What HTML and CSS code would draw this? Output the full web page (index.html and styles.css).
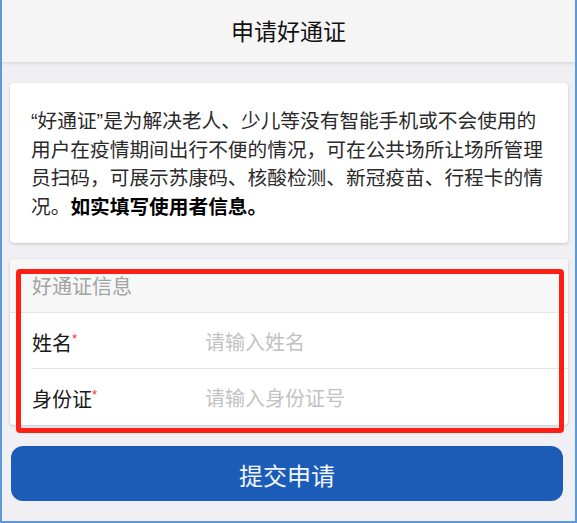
FILE: index.html
```html
<!DOCTYPE html>
<html lang="zh-CN">
<head>
    <meta charset="UTF-8">
    <meta name="viewport" content="width=device-width, initial-scale=1.0">
    <title>申请好通证</title>
    <link rel="stylesheet" href="styles.css">
</head>
<body>
    <div class="phone">
        <header class="top-bar">申请好通证</header>
        <div class="content">
            <div class="card intro">
                <p>“好通证”是为解决老人、少儿等没有智能手机或不会使用的用户在疫情期间出行不便的情况，可在公共场所让场所管理员扫码，可展示苏康码、核酸检测、新冠疫苗、行程卡的情况。<strong>如实填写使用者信息。</strong></p>
            </div>
            <div class="card form-card">
                <div class="form-title">好通证信息</div>
                <div class="form-row">
                    <label class="form-label">姓名<span class="required">*</span></label>
                    <input class="form-input" type="text" placeholder="请输入姓名">
                </div>
                <div class="form-row">
                    <label class="form-label">身份证<span class="required">*</span></label>
                    <input class="form-input" type="text" placeholder="请输入身份证号">
                </div>
                <!-- annotation box drawn over the form -->
                <div class="highlight"></div>
            </div>
            <button class="submit-btn">提交申请</button>
        </div>
    </div>
</body>
</html>
```

FILE: styles.css
```css
html, body {
    margin: 0;
    padding: 0;
}
body {
    font-family: "Liberation Sans", "Noto Sans CJK SC", sans-serif;
    color: #222;
    background-color: #efeff4;
}
.phone {
    width: 577px;
    height: 523px;
    box-sizing: border-box;
    border: 2px solid #5b9ad6;
    border-top: none;
    background-color: #efeff4;
    overflow: hidden;
}
.top-bar {
    height: 62px;
    line-height: 64px;
    text-align: center;
    font-size: 23px;
    color: #111;
    background-color: #f5f5f5;
    box-shadow: 0 1px 4px rgba(0,0,0,0.12);
    position: relative;
    z-index: 1;
}
.content {
    padding: 21px 7px 0 8px;
}
.card {
    background-color: white;
    border-radius: 4px;
    box-shadow: 0 1px 3px rgba(0,0,0,0.18);
}
.intro {
    padding: 24px 17px 22px 21px;
}
.intro p {
    margin: 0;
    font-size: 19.7px;
    line-height: 28.5px;
    color: #2a2a2a;
}
.intro strong {
    color: #000;
}
.form-card {
    margin-top: 16px;
    position: relative;
}
.form-title {
    height: 53px;
    line-height: 57px;
    padding-left: 22px;
    font-size: 20px;
    color: #a3a3a3;
    background-color: #f7f7f7;
    border-bottom: 1px solid #e6e6e6;
    border-radius: 4px 4px 0 0;
}
.form-row {
    display: flex;
    align-items: center;
    height: 55px;
    margin-left: 21px;
}
.form-row + .form-row {
    height: 56px;
    border-top: 1px solid #e4e4e4;
}
.form-label {
    width: 173px;
    padding-left: 1px;
    font-size: 20px;
    color: #1a1a1a;
    padding-top: 3px;
}
.required {
    color: #ff2a2a;
    font-size: 13px;
    vertical-align: 8px;
}
.form-input {
    flex: 1;
    border: none;
    outline: none;
    background: transparent;
    font-family: inherit;
    font-size: 20px;
    padding: 5px 0 0 0;
    color: #333;
}
.form-input::placeholder {
    color: #c2c2c2;
}
.highlight {
    position: absolute;
    top: 10px;
    left: 6px;
    right: 4px;
    bottom: -8px;
    border: 5px solid #ff1e14;
    border-radius: 4px;
    pointer-events: none;
}
.submit-btn {
    display: block;
    width: 552px;
    height: 55px;
    margin: 21px 0 0 1px;
    border: none;
    border-radius: 12px;
    background-color: #1b5cb9;
    color: #f2f5fb;
    font-family: inherit;
    font-size: 24px;
    padding-top: 2px;
    cursor: pointer;
}
```
